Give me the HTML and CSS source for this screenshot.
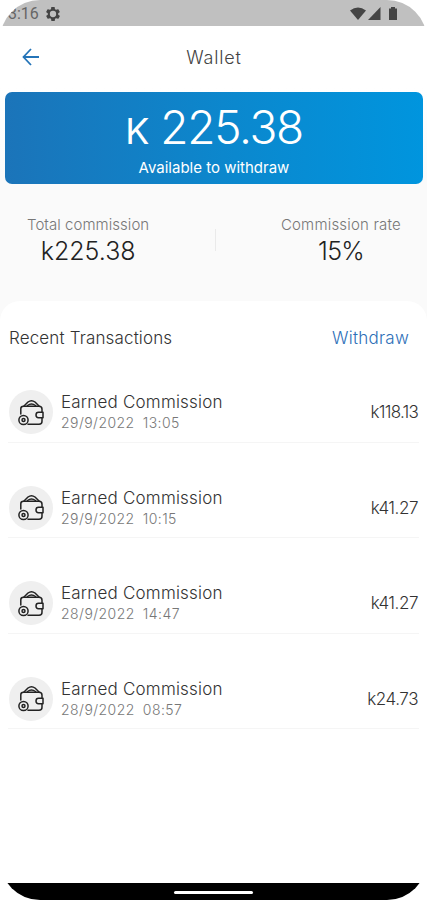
FILE: index.html
```html
<!DOCTYPE html>
<html lang="en">
<head>
  <meta charset="UTF-8">
  <meta name="viewport" content="width=device-width, initial-scale=1.0">
  <title>Wallet</title>
  <link rel="stylesheet" href="styles.css">
</head>
<body>
  <!-- Shared wallet icon -->
  <svg class="symbols" width="0" height="0">
    <symbol id="wallet" viewBox="0 0 27 27">
      <g fill="none" stroke="#222" stroke-width="1.500" stroke-linejoin="round" stroke-linecap="round">
        <path d="M6 7 L10 3 Q13.500 .3 17 3 L21 7 M9.500 6.500 Q13.500 3.500 17.500 6.500"/>
        <path d="M2.800 15 V9.800 Q2.800 7.300 5.500 7.300 H21 Q24 7.300 24 10.300 V13 M24 19 V22.200 Q24 25.200 21 25.200 H10"/>
        <path d="M25 13.300 H20.500 Q18 13.300 18 16 Q18 18.700 20.500 18.700 H25 Z"/>
        <circle cx="5.500" cy="21" r="4.600"/>
        <circle cx="5.500" cy="21" r="1.500"/>
      </g>
    </symbol>
  </svg>

  <div class="phone">
    <div class="status-bar">
      <span class="clock">3:16</span>
      <svg class="gear" width="14" height="14" viewBox="2 2 20 20">
        <path fill="#444" fill-rule="evenodd" d="M19.400 13a7.500 7.500 0 0 0 0-2l2.100-1.600c.2-.2.2-.4.1-.6l-2-3.500c-.1-.2-.4-.3-.6-.2l-2.500 1a7.300 7.300 0 0 0-1.700-1l-.4-2.600c0-.3-.2-.5-.4-.5h-4c-.2 0-.4.2-.5.4l-.4 2.700c-.6.200-1.200.6-1.700 1l-2.500-1c-.2-.1-.5 0-.6.200l-2 3.500c-.1.200-.1.500.1.600L4.600 11a7.500 7.500 0 0 0 0 2l-2.100 1.600c-.2.200-.2.400-.1.600l2 3.500c.1.200.4.300.6.200l2.500-1c.5.400 1.100.7 1.700 1l.4 2.600c0 .3.200.5.500.5h4c.2 0 .4-.2.400-.5l.4-2.600c.6-.3 1.200-.6 1.700-1l2.500 1c.2.100.5 0 .6-.2l2-3.500c.1-.2.100-.4-.1-.6zM12 16.500a4.500 4.500 0 1 1 0-9 4.500 4.500 0 0 1 0 9z"/>
      </svg>
      <svg class="signals" width="48" height="14" viewBox="0 0 48 14">
        <path fill="#444" d="M0 3.500 Q8 -2.500 16 3.500 L8 13 Z"/>
        <path fill="#444" d="M18 13 L30.500 0 V13 Z"/>
        <path fill="#444" d="M39 1.500 H41 V0 H45 V1.500 H47 V13 H39 Z"/>
      </svg>
    </div>

    <div class="header">
      <svg class="back" width="18" height="18" viewBox="0 0 18 18">
        <path d="M17 9 H1.500 M9 1 L1.500 9 L9 17" fill="none" stroke="#2474b8" stroke-width="1.800"/>
      </svg>
      <h1>Wallet</h1>
    </div>

    <div class="summary">
      <div class="balance">
        <div class="amount"><span class="currency">K</span><span class="figure">225.38</span></div>
        <div class="caption">Available to withdraw</div>
      </div>
      <div class="stats">
        <div class="stat">
          <div class="label">Total commission</div>
          <div class="value">k225.38</div>
        </div>
        <div class="divider"></div>
        <div class="stat">
          <div class="label rate-label">Commission rate</div>
          <div class="value rate">15%</div>
        </div>
      </div>
    </div>

    <div class="transactions">
      <div class="title-row">
        <h2>Recent Transactions</h2>
        <a class="withdraw">Withdraw</a>
      </div>
      <div class="item">
        <div class="icon"><svg width="27" height="27"><use href="#wallet"/></svg></div>
        <div class="info">
          <div class="name">Earned Commission</div>
          <div class="date"><span>29/9/2022</span><span class="time">13:05</span></div>
        </div>
        <div class="sum narrow">k118.13</div>
      </div>
      <div class="item">
        <div class="icon"><svg width="27" height="27"><use href="#wallet"/></svg></div>
        <div class="info">
          <div class="name">Earned Commission</div>
          <div class="date"><span>29/9/2022</span><span class="time">10:15</span></div>
        </div>
        <div class="sum">k41.27</div>
      </div>
      <div class="item">
        <div class="icon"><svg width="27" height="27"><use href="#wallet"/></svg></div>
        <div class="info">
          <div class="name">Earned Commission</div>
          <div class="date"><span>28/9/2022</span><span class="time">14:47</span></div>
        </div>
        <div class="sum">k41.27</div>
      </div>
      <div class="item">
        <div class="icon"><svg width="27" height="27"><use href="#wallet"/></svg></div>
        <div class="info">
          <div class="name">Earned Commission</div>
          <div class="date"><span>28/9/2022</span><span class="time">08:57</span></div>
        </div>
        <div class="sum">k24.73</div>
      </div>
    </div>

    <div class="nav-bar"><div class="handle"></div></div>
  </div>
</body>
</html>
```
FILE: styles.css
```css
* {
  box-sizing: border-box;
}
body {
  margin: 0;
  background: #fff;
  font-family: Inter, "Liberation Sans", sans-serif;
  font-weight: 300;
  color: #333;
}
.symbols {
  display: block;
}
.phone {
  display: flex;
  flex-direction: column;
  width: 427px;
  height: 900px;
  border-radius: 40px;
  overflow: hidden;
  background: #fff;
}
.status-bar {
  display: flex;
  align-items: center;
  height: 26px;
  padding: 1px 29px 0 8px;
  background: #c0c0c0;
}
.clock {
  font-family: Roboto, sans-serif;
  font-size: 16px;
  font-weight: 400;
  color: #666;
}
.gear {
  margin-left: 7px;
}
.signals {
  margin-left: auto;
}
.header {
  display: flex;
  align-items: center;
  height: 62px;
  padding-left: 22px;
}
h1 {
  flex: 1;
  margin: 0 40px 0 0;
  padding-left: 1px;
  text-align: center;
  font-size: 18px;
  font-weight: 300;
  letter-spacing: 0.8px;
  color: #444;
}
.summary {
  height: 234px;
  padding: 4px 4px 0 5px;
  background: linear-gradient(#fff 0, #fafafa 90px);
}
.balance {
  height: 92px;
  padding-top: 8px;
  border-radius: 7px;
  background: linear-gradient(90deg, #1b74b9, #0b88ce 55%, #0095de);
  color: #fff;
  text-align: center;
}
.amount {
  display: flex;
  justify-content: center;
  align-items: baseline;
  gap: 12px;
  line-height: 54px;
}
.currency {
  font-size: 36px;
  font-weight: 400;
  letter-spacing: -1px;
}
.figure {
  font-size: 46px;
  font-weight: 300;
  letter-spacing: -1.300px;
}
.caption {
  font-size: 15px;
  line-height: 20px;
  font-weight: 400;
}
.stats {
  display: flex;
  justify-content: space-between;
  align-items: center;
  padding: 30px 22px 0;
}
.stat {
  text-align: center;
}
.label {
  font-size: 15px;
  line-height: 22px;
  letter-spacing: 0.050px;
  color: #777;
}
.rate-label {
  letter-spacing: 0.200px;
}
.value {
  font-size: 25px;
  line-height: 30px;
  color: #222;
}
.rate {
  letter-spacing: -0.800px;
}
.divider {
  width: 1px;
  height: 22px;
  background: #eaeaea;
}
.transactions {
  flex: 1;
  padding: 28px 8px 0;
  margin-top: -21px;
  border-radius: 20px 20px 0 0;
  background: #fff;
}
.title-row {
  display: flex;
  justify-content: space-between;
  align-items: center;
  height: 18px;
  padding: 0 10px 0 1px;
}
h2 {
  margin: 0;
  font-size: 17px;
  font-weight: 300;
  letter-spacing: 0.150px;
  color: #333;
}
.withdraw {
  font-size: 17px;
  letter-spacing: 0.250px;
  color: #2e70b8;
}
.item {
  display: flex;
  align-items: center;
  height: 95.500px;
  padding: 43px 1px 7px;
  border-bottom: 1px solid #f5f5f5;
}
.icon {
  display: flex;
  align-items: center;
  justify-content: center;
  width: 44px;
  height: 44px;
  border-radius: 50%;
  background: #efefef;
}
.info {
  flex: 1;
  padding-left: 8px;
}
.name {
  font-size: 17px;
  line-height: 22px;
  letter-spacing: 0.200px;
}
.date {
  display: flex;
  gap: 8px;
  font-size: 14px;
  line-height: 20px;
  letter-spacing: 0.450px;
  color: #777;
}
.sum {
  font-size: 17px;
  letter-spacing: -0.450px;
}
.narrow {
  letter-spacing: -0.750px;
}
.nav-bar {
  display: flex;
  justify-content: center;
  height: 17px;
  padding-top: 8px;
  background: #000;
}
.handle {
  width: 79px;
  height: 3px;
  border-radius: 2px;
  background: #fff;
}
```
